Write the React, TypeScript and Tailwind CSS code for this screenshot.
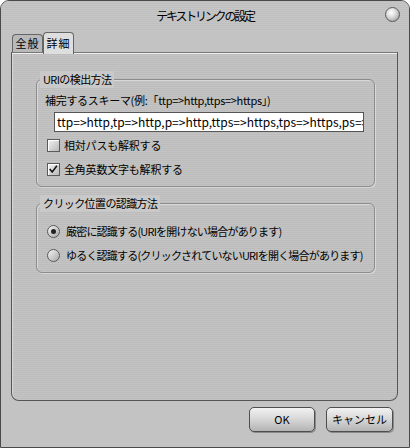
import React from "react";

const font = "font-['Noto_Sans_CJK_JP','Liberation_Sans',sans-serif]";

const CheckBox: React.FC<{ checked?: boolean; label: string }> = ({ checked, label }) => (
  <div className="flex items-center h-[16px] ml-[10px] gap-[4px]">
    <div className="relative w-[13px] h-[13px] border border-[#5a5a5a] bg-gradient-to-br from-[#f4f4f4] to-[#b8b8b8] shadow-[inset_1px_1px_0_#ffffff]">
      {checked && (
        <svg viewBox="0 0 13 13" className="absolute left-0 top-0 w-[11px] h-[11px]">
          <path d="M2 6 L5 9.5 L10.5 2" fill="none" stroke="#111" strokeWidth="1.8" />
        </svg>
      )}
    </div>
    <span className="text-[11px] leading-[16px] tracking-[-0.2px] whitespace-nowrap">{label}</span>
  </div>
);

const Radio: React.FC<{ checked?: boolean; label: string }> = ({ checked, label }) => (
  <div className="flex items-center h-[16px] ml-[10px] gap-[6px]">
    <div className="flex items-center justify-center w-[13px] h-[13px] rounded-full border border-[#5a5a5a] bg-gradient-to-br from-[#f6f6f6] to-[#a8a8a8]">
      {checked && <div className="w-[5px] h-[5px] rounded-full bg-[#222]" />}
    </div>
    <span className="text-[11px] leading-[16px] tracking-[-0.8px] whitespace-nowrap">{label}</span>
  </div>
);

const Group: React.FC<{ title: string; className: string; children: React.ReactNode }> = ({
  title,
  className,
  children,
}) => (
  <div className={`relative border border-[#8c8c8c] rounded-[6px] shadow-[1px_1px_0_#d8d8d8,inset_1px_1px_0_#d8d8d8] ${className}`}>
    <span className="absolute left-[3px] -top-[9px] px-[3px] h-[17px] bg-[#c9c9c9] text-[11px] leading-[17px] tracking-[-0.6px] whitespace-nowrap">
      {title}
    </span>
    {children}
  </div>
);

const Button: React.FC<{ label: string; className: string }> = ({ label, className }) => (
  <div
    className={`h-[25px] flex items-center justify-center rounded-[5px] border border-[#4e4e4e] bg-gradient-to-b from-[#f2f2f2] via-[#d6d6d6] to-[#b4b4b4] shadow-[1px_1px_0_#8a8a8a] text-[11px] ${className}`}
  >
    {label}
  </div>
);

export default function App() {
  return (
    <div className={`w-[410px] h-[448px] bg-white overflow-hidden text-black ${font}`}>
      <div className="h-[448px] rounded-t-[9px] border border-[#4a4a4a] bg-[#c3c3c3] flex flex-col">
        {/* title bar */}
        <div className="relative h-[30px] flex items-center justify-center rounded-t-[8px] bg-[repeating-linear-gradient(0deg,#c6c6c6_0px,#c6c6c6_1px,#bfbfbf_1px,#bfbfbf_2px)]">
          <span className="text-[12px] tracking-[-2.2px]">テキストリンクの設定</span>
          <div className="absolute left-[384px] top-[6px] w-[15px] h-[15px] rounded-full border border-[#5a5a5a] bg-[radial-gradient(circle_at_40%_35%,#ffffff_0%,#dcdcdc_40%,#8e8e8e_100%)]" />
        </div>

        {/* tabs */}
        <div className="h-[21px] flex items-end pl-[11px]">
          <div className="w-[31px] h-[18px] rounded-t-[4px] border border-b-0 border-[#666] bg-[#b9b9b9] text-[11px] leading-[17px] text-center tracking-[1px]">
            全般
          </div>
          <div className="relative z-10 -mb-[2px] w-[31px] h-[22px] rounded-t-[4px] border border-b-0 border-[#666] bg-[#dedede] text-[11px] leading-[20px] text-center tracking-[1px]">
            詳細
          </div>
        </div>

        {/* panel */}
        <div className="ml-[10px] mr-[11px] h-[349px] border border-[#555] border-t-[#777] rounded-b-[8px] shadow-[inset_0_1px_0_#f0f0f0,inset_1px_0_0_#d8d8d8] bg-[repeating-linear-gradient(0deg,#c4c4c4_0px,#c4c4c4_1px,#bcbcbc_1px,#bcbcbc_2px)] pl-[24px] pr-[22px] pt-[26px]">
          <Group title="URIの検出方法" className="h-[108px]">
            <div className="pt-[12px] pl-[8px] text-[11px] leading-[16px] tracking-[-0.3px] whitespace-nowrap">
              補完するスキーマ(例:「ttp=&gt;http,ttps=&gt;https」)
            </div>
            <div className="mt-[4px] ml-[17px] w-[310px] h-[20px] border border-[#555] bg-white overflow-hidden whitespace-nowrap text-[12px] leading-[18px] pl-[2px]">
              ttp=&gt;http,tp=&gt;http,p=&gt;http,ttps=&gt;https,tps=&gt;https,ps=&gt;https
            </div>
            <div className="mt-[5px] flex flex-col gap-[8px]">
              <CheckBox label="相対パスも解釈する" />
              <CheckBox checked label="全角英数文字も解釈する" />
            </div>
          </Group>

          <Group title="クリック位置の認識方法" className="mt-[16px] h-[70px]">
            <div className="pt-[19px] flex flex-col gap-[8px]">
              <Radio checked label="厳密に認識する(URIを開けない場合があります)" />
              <Radio label="ゆるく認識する(クリックされていないURIを開く場合があります)" />
            </div>
          </Group>
        </div>

        {/* buttons */}
        <div className="mt-[6px] flex justify-end gap-[11px] pr-[16px]">
          <Button label="OK" className="w-[66px]" />
          <Button label="キャンセル" className="w-[67px]" />
        </div>
      </div>
    </div>
  );
}
